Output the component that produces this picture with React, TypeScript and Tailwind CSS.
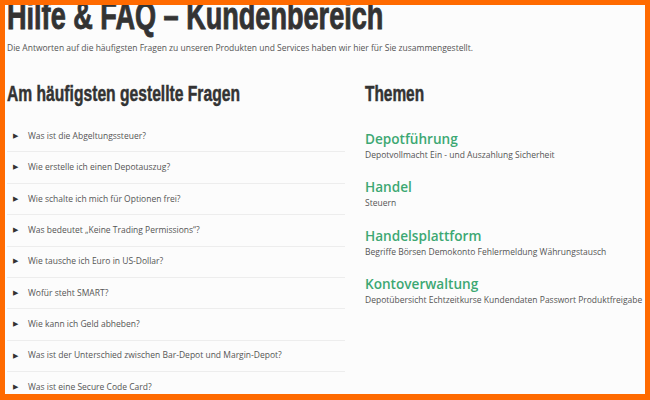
import React from "react";

const faqs = [
  "Was ist die Abgeltungssteuer?",
  "Wie erstelle ich einen Depotauszug?",
  "Wie schalte ich mich für Optionen frei?",
  "Was bedeutet „Keine Trading Permissions“?",
  "Wie tausche ich Euro in US-Dollar?",
  "Wofür steht SMART?",
  "Wie kann ich Geld abheben?",
  "Was ist der Unterschied zwischen Bar-Depot und Margin-Depot?",
  "Was ist eine Secure Code Card?",
];

const themes = [
  { t: "Depotführung", s: "Depotvollmacht Ein - und Auszahlung Sicherheit" },
  { t: "Handel", s: "Steuern" },
  { t: "Handelsplattform", s: "Begriffe Börsen Demokonto Fehlermeldung Währungstausch" },
  { t: "Kontoverwaltung", s: "Depotübersicht Echtzeitkurse Kundendaten Passwort Produktfreigabe" },
];

const cond = { fontFamily: '"Liberation Sans", Arial, sans-serif' };

export default function App() {
  return (
    <div className="w-[650px] h-[400px] overflow-hidden bg-[#ff6a00]">
      <div
        className="ml-[5px] mt-[5px] w-[640px] h-[389px] overflow-hidden bg-[#fcfcfc] pl-[2px] text-[#444]"
        style={{ fontFamily: '"Open Sans", sans-serif' }}
      >
        <h1 className="mt-[-10px] h-[42px] text-[38px] leading-[42px] font-bold text-[#333] whitespace-nowrap [-webkit-text-stroke:0.9px_#333]" style={cond}>
          <span className="inline-block origin-left scale-x-[0.713]">Hilfe &amp; FAQ – Kundenbereich</span>
        </h1>
        <p className="mt-[5px] text-[8.5px] leading-[12px] text-[#555] whitespace-nowrap">
          Die Antworten auf die häufigsten Fragen zu unseren Produkten und Services haben wir hier für Sie zusammengestellt.
        </p>
        <div className="mt-[27px] flex">
          <div className="w-[338px]">
            <h2 className="h-[26px] text-[22px] leading-[26px] font-bold text-[#333] whitespace-nowrap [-webkit-text-stroke:0.5px_#333]" style={cond}>
              <span className="inline-block origin-left scale-x-[0.711]">Am häufigsten gestellte Fragen</span>
            </h2>
            <ul className="mt-[14px]">
              {faqs.map((q, i) => (
                <li key={i} className="flex items-center h-[31.375px] border-b border-[#ededed] pl-[6px]">
                  <span className="text-[7px] text-[#333] w-[15px]">▶</span>
                  <span className="text-[8.5px] text-[#555] whitespace-nowrap">{q}</span>
                </li>
              ))}
            </ul>
          </div>
          <div className="ml-[20px] flex-1 whitespace-nowrap">
            <h2 className="h-[26px] text-[22px] leading-[26px] font-bold text-[#333] [-webkit-text-stroke:0.5px_#333]" style={cond}>
              <span className="inline-block origin-left scale-x-[0.70]">Themen</span>
            </h2>
            <div className="mt-[22px] flex flex-col gap-[16.4px]">
              {themes.map((th, i) => (
                <div key={i}>
                  <div className="text-[13.6px] leading-[20px] font-semibold text-[#3ca873]">{th.t}</div>
                  <div className="text-[8.5px] leading-[12px] text-[#555]">{th.s}</div>
                </div>
              ))}
            </div>
          </div>
        </div>
      </div>
    </div>
  );
}
